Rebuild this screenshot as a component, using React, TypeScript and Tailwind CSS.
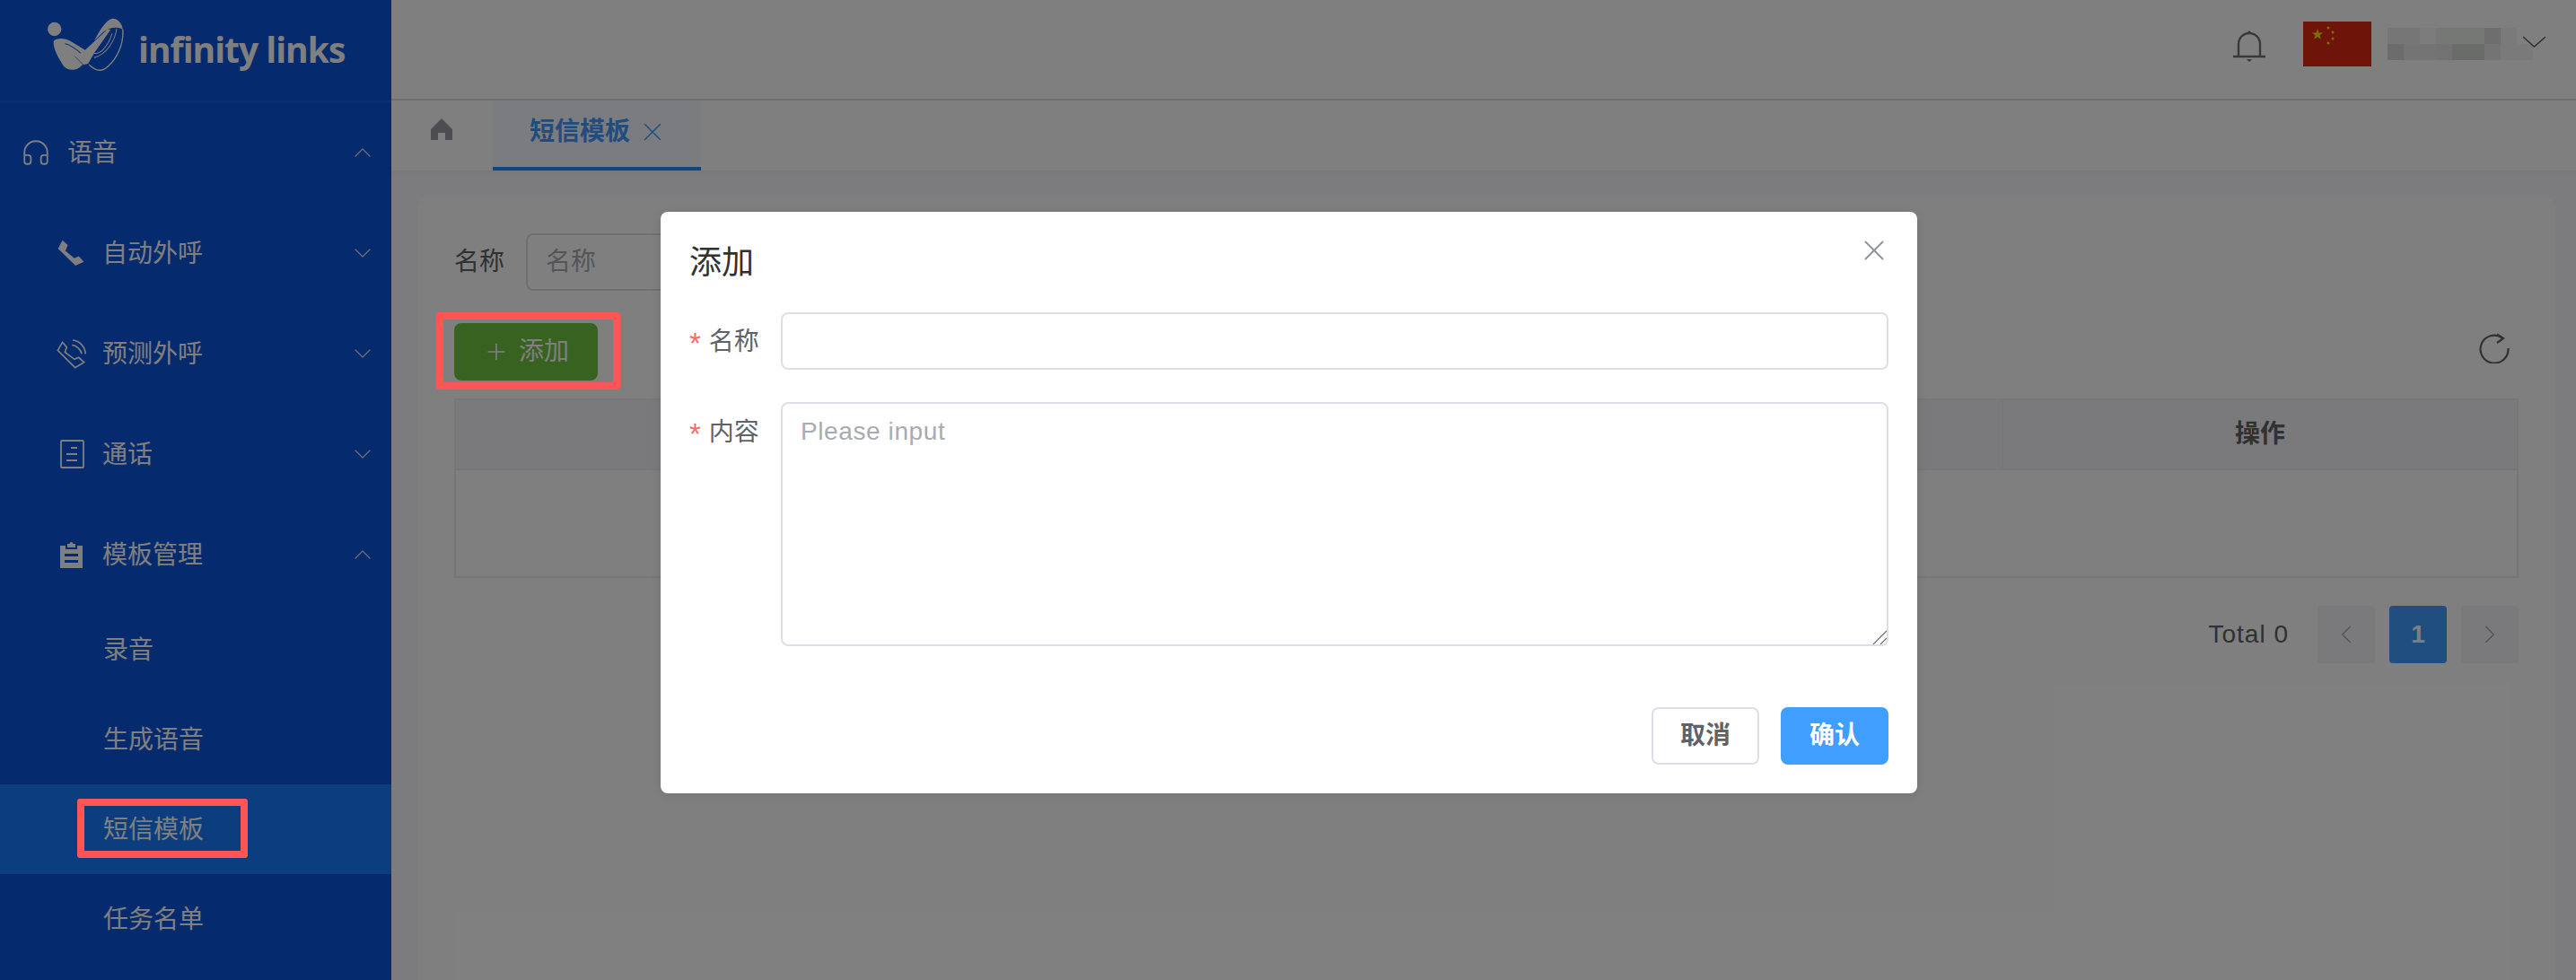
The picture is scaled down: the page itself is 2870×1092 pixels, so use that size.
import React from 'react';
import { Headphones, ChevronUp, ChevronDown, ChevronLeft, ChevronRight, Plus, X } from 'lucide-react';

const CJK = 'font-["Liberation_Sans","Noto_Sans_CJK_SC",sans-serif]';

function Logo() {
  return (
    <svg viewBox="40 30 260 185" className="w-[87px] h-[62px] shrink-0">
      <circle cx="63" cy="70" r="23" fill="#fff" />
      <path d="M60 110C70 98 100 100 120 112L165 140L240 70L250 72L195 150L175 185L155 190C140 210 110 210 95 195C75 165 58 135 60 110Z" fill="#fff" />
      <path d="M98 118C115 122 140 140 150 150" fill="none" stroke="#0c54dc" strokeWidth="3" />
      <path d="M130 160L160 190" fill="none" stroke="#0c54dc" strokeWidth="2" />
      <path d="M195 110C215 70 235 40 255 35C275 32 290 55 290 70C270 60 245 65 225 80Z" fill="#fff" />
      <path d="M290 70C295 120 270 170 240 195C222 212 200 210 178 188" fill="none" stroke="#fff" strokeWidth="4" />
      <path d="M270 68C265 110 235 155 195 165" fill="none" stroke="#fff" strokeWidth="3" />
      <path d="M195 150C215 155 240 130 255 85" fill="none" stroke="#fff" strokeWidth="3" />
    </svg>
  );
}

function PhoneIcon() {
  return (
    <svg viewBox="40 20 100 95" className="w-[33px] h-[32px] ml-[-2px]" fill="white">
      <path d="M45 52L60 24L78 40L70 60L100 85L115 78L132 97L104 110Z" />
    </svg>
  );
}

function PhoneWaveIcon() {
  return (
    <svg viewBox="35 20 105 105" className="w-[35px] h-[35px] ml-[-3px]" fill="none" stroke="white" strokeWidth="5">
      <path d="M42 60L58 33L72 50L66 66L98 90L112 84L130 100L100 118Z" />
      <path d="M90 42C105 44 120 58 122 72M92 26C115 28 133 48 135 72" />
    </svg>
  );
}

function DocIcon() {
  return (
    <svg viewBox="0 0 27 32" className="w-[27px] h-[32px] ml-[2px]" fill="none" stroke="white" strokeWidth="1.8">
      <rect x="1" y="1" width="25" height="30" rx="1" />
      <path d="M12 9h7M7 16h12M7 23h12" />
    </svg>
  );
}

function ClipIcon() {
  return (
    <svg viewBox="0 0 25 30" className="w-[25px] h-[30px] ml-[2px]" fill="white">
      <path d="M8 3h2.500a2 2 0 0 1 4 0H17v4H8zM0 5h6v4h13V5h6v25H0zM5 14v3h15v-3zM5 21v3h15v-3z" fillRule="evenodd" />
    </svg>
  );
}

function NavRow({ icon, label, open, iconBox = 'pl-[65px] w-[114px]' }: { icon: React.ReactNode; label: string; open?: boolean; iconBox?: string }) {
  const Arrow = open ? ChevronUp : ChevronDown;
  return (
    <div className="h-[112px] flex items-center text-white text-[28px] pr-[16px]">
      <div className={`${iconBox} flex items-center`}>{icon}</div>
      <span className="flex-1 pt-[2px]">{label}</span>
      <Arrow className="w-[32px] h-[32px] text-[#e0e0e8]" strokeWidth={0.9} />
    </div>
  );
}

function SubRow({ label, active }: { label: string; active?: boolean }) {
  return (
    <div className={`h-[100px] flex items-center pl-[115px] pt-[2px] text-white text-[28px] ${active ? 'bg-[#187afc]' : ''}`}>
      {label}
    </div>
  );
}

function Sidebar() {
  return (
    <aside className="w-[436px] shrink-0 bg-[#0c54dc] flex flex-col">
      <div className="h-[114px] border-b-2 border-[#1a5fe0] flex items-center pl-[53px] pb-[12px]">
        <Logo />
        <span className="ml-[14px] mt-[8px] text-white text-[39px] font-bold font-['Open_Sans',sans-serif] tracking-[-1px] leading-none">infinity links</span>
      </div>
      <NavRow icon={<Headphones className="w-[34px] h-[34px]" strokeWidth={1.3} />} label="语音" open iconBox="pl-[23px] w-[75px]" />
      <NavRow icon={<PhoneIcon />} label="自动外呼" />
      <NavRow icon={<PhoneWaveIcon />} label="预测外呼" />
      <NavRow icon={<DocIcon />} label="通话" />
      <NavRow icon={<ClipIcon />} label="模板管理" open />
      <SubRow label="录音" />
      <SubRow label="生成语音" />
      <SubRow label="短信模板" active />
      <SubRow label="任务名单" />
    </aside>
  );
}

const MOSAIC = [
  'bg-[#ececec]', 'bg-[#ececec]', 'bg-[#f8f8f8]', 'bg-[#ecf0ec]', 'bg-[#ecf0ec]', 'bg-[#ecf0ec]', 'bg-[#dcdcdc]', 'bg-[#f4f4f4]', 'bg-[#ffffff]',
  'bg-[#d8d8d8]', 'bg-[#e8e8e8]', 'bg-[#e8e8e8]', 'bg-[#e4e4e4]', 'bg-[#d4d8d4]', 'bg-[#d4d8d4]', 'bg-[#e8e8e8]', 'bg-[#f4f4f4]', 'bg-[#f4f4f4]',
];

function Header() {
  return (
    <header className="h-[112px] border-b-2 border-[#dcdce4] bg-white flex items-center justify-end shrink-0">
      <svg viewBox="0 0 36 36" className="w-[36px] h-[36px] mr-[42px] mt-[-6px]" fill="none" stroke="#707276" strokeWidth="2.4">
        <path d="M6 28V15a12 12 0 0 1 24 0v13" />
        <path d="M0 29h36" />
        <path d="M16 2h4l-2-2zM15 32h6l-3 3z" fill="#707276" stroke="none" />
      </svg>
      <div className="w-[76px] h-[50px] bg-[#de2910] relative mt-[-12px]">
        <svg viewBox="0 0 76 50" className="w-[76px] h-[50px]">
          <path d="M16 8l1.500 4.500h4.700l-3.800 2.800 1.500 4.500-3.900-2.800-3.900 2.800 1.500-4.500-3.800-2.800h4.700z" fill="#ffde00" />
          <circle cx="28" cy="7" r="1.500" fill="#ffde00" />
          <circle cx="33" cy="12" r="1.500" fill="#ffde00" />
          <circle cx="33" cy="19" r="1.500" fill="#ffde00" />
          <circle cx="28" cy="24" r="1.500" fill="#ffde00" />
        </svg>
      </div>
      <div className="relative w-[162px] h-[36px] ml-[18px] mr-[48px] mt-[-12px] grid grid-cols-[repeat(9,18px)] grid-rows-2">
        {MOSAIC.map((c, i) => <div key={i} className={c} />)}
        <svg viewBox="0 0 25 13" className="absolute right-[-14px] top-[9px] w-[25px] h-[13px]" fill="none" stroke="#606266" strokeWidth="1.600">
          <path d="M0 1l12.500 11L25 1" />
        </svg>
      </div>
    </header>
  );
}

function Tabs() {
  return (
    <div className="h-[78px] bg-white shadow-[0_2px_4px_rgba(0,0,0,0.04)] flex shrink-0">
      <div className="w-[113px] flex items-start justify-center pt-[20px] pr-[2px]">
        <svg viewBox="0 0 24 24" className="w-[24px] h-[24px]" fill="#9a9aa2">
          <path d="M12 0L24 12V24H16V16H8V24H0V12Z" />
        </svg>
      </div>
      <div className="w-[232px] border-b-[4px] border-[#1490ff] bg-[#f4f8ff] flex items-center pl-[41px] text-[#4098ff] text-[28px] font-semibold pb-[4px]">
        短信模板
        <X className="w-[34px] h-[34px] ml-[8px]" strokeWidth={1} />
      </div>
    </div>
  );
}

function Pager() {
  return (
    <div className="mt-[31px] flex items-center justify-end">
      <span className="text-[28px] text-[#606266] mr-[32px] tracking-[1px]">Total 0</span>
      <div className="w-[64px] h-[64px] rounded-[4px] bg-[#f4f4f8] flex items-center justify-center text-[#a8abb2]"><ChevronLeft className="w-[34px] h-[34px]" strokeWidth={1} /></div>
      <div className="w-[64px] h-[64px] rounded-[4px] bg-[#409eff] ml-[16px] flex items-center justify-center text-white text-[28px] font-bold">1</div>
      <div className="w-[64px] h-[64px] rounded-[4px] bg-[#f4f4f8] ml-[16px] flex items-center justify-center text-[#a8abb2]"><ChevronRight className="w-[34px] h-[34px]" strokeWidth={1} /></div>
    </div>
  );
}

function Card() {
  return (
    <section className="flex-1 ml-[30px] mr-[23px] mt-[30px] bg-white rounded-t-[12px] pl-[40px] pr-[41px] pt-[40px] min-h-0">
      <div className="flex items-center h-[64px]">
        <span className="text-[28px] text-[#606266] mr-[24px]">名称</span>
        <div className="w-[360px] h-[64px] border-2 border-[#dcdfe6] rounded-[8px] flex items-center pl-[20px] text-[28px] text-[#a8abb2]">名称</div>
      </div>
      <div className="mt-[36px] flex items-center justify-between h-[64px]">
        <button className="w-[160px] h-[64px] rounded-[8px] bg-[#70c43e] text-white text-[28px] flex items-center justify-center gap-[10px]">
          <Plus className="w-[30px] h-[30px]" strokeWidth={1.3} />
          添加
        </button>
        <svg viewBox="0 0 34 34" className="w-[34px] h-[34px] mr-[10px] mb-[8px]" fill="none" stroke="#606266" strokeWidth="2.200">
          <path d="M26 5.500A15.500 15.500 0 1 0 32.500 17" />
          <path d="M20 1.500L27 6l-7 5" />
        </svg>
      </div>
      <div className="mt-[20px] border-2 border-[#ebeef5] flex flex-col">
        <div className="h-[78px] bg-[#f4f4f8] border-b-2 border-[#ebeef5] flex">
          <div className="flex-1" />
          <div className="w-[574px] border-l-2 border-[#ebeef5] flex items-center justify-center text-[28px] font-bold text-[#606266]">操作</div>
        </div>
        <div className="h-[118px]" />
      </div>
      <Pager />
    </section>
  );
}

function Modal() {
  return (
    <div className="absolute inset-0 bg-black/50">
      <div className="relative ml-[736px] mt-[236px] w-[1400px] h-[648px] bg-white rounded-[8px] px-[32px] shadow-[0_2px_12px_rgba(0,0,0,0.1)]">
        <div className="h-[112px] flex items-start pt-[35px]">
          <span className="text-[36px] leading-[44px] text-[#303133]">添加</span>
          <X className="absolute right-[29px] top-[24px] w-[38px] h-[38px] text-[#909399]" strokeWidth={1.2} />
        </div>
        <div className="flex items-center">
          <label className="w-[102px] pt-[2px] text-[28px] text-[#606266] whitespace-nowrap"><span className="text-[33px] leading-none align-[-4px] text-[#f56c6c] mr-[9px]">*</span>名称</label>
          <div className="flex-1 h-[64px] border-2 border-[#dcdfe6] rounded-[8px]" />
        </div>
        <div className="flex items-start mt-[36px]">
          <label className="w-[102px] text-[28px] text-[#606266] whitespace-nowrap mt-[13px]"><span className="text-[33px] leading-none align-[-4px] text-[#f56c6c] mr-[9px]">*</span>内容</label>
          <div className="relative flex-1 h-[272px]">
            <textarea placeholder="Please input" className="block resize-none w-full h-full border-2 border-[#dcdfe6] rounded-[8px] px-[20px] py-[10px] text-[28px] tracking-[0.6px] placeholder:text-[#a8abb2]" />
            <svg viewBox="0 0 16 16" className="absolute right-[2px] bottom-[2px] w-[16px] h-[16px]" fill="none" stroke="#606266" strokeWidth="1.100">
              <path d="M1 16L16 1M9 16l7-7" />
            </svg>
          </div>
        </div>
        <div className="mt-[68px] flex justify-end gap-[24px]">
          <button className="w-[120px] h-[64px] border-2 border-[#dcdfe6] rounded-[8px] text-[28px] font-semibold text-[#606266]">取消</button>
          <button className="w-[120px] h-[64px] rounded-[8px] bg-[#409eff] text-[28px] font-semibold text-white">确认</button>
        </div>
      </div>
      <div className="absolute left-[486px] top-[348px] w-[205px] h-[86px] border-[8px] border-[#ff5555] rounded-[3px]" />
      <div className="absolute left-[86px] top-[890px] w-[190px] h-[66px] border-[8px] border-[#ff5555] rounded-[3px]" />
    </div>
  );
}

export default function App() {
  return (
    <div className={`relative w-[2870px] h-[1092px] overflow-hidden flex bg-[#f8f8fc] ${CJK}`}>
      <Sidebar />
      <main className="flex-1 flex flex-col min-w-0">
        <Header />
        <Tabs />
        <Card />
      </main>
      <Modal />
    </div>
  );
}
